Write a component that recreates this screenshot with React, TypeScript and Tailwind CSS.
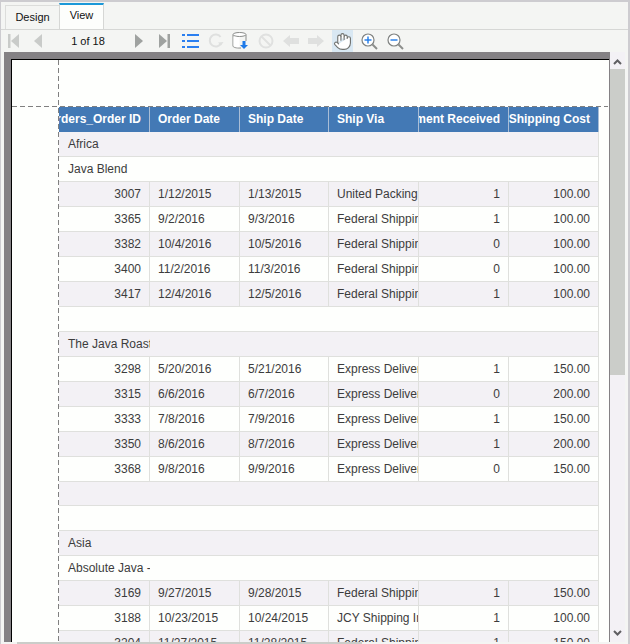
import React from 'react';
import { Hand } from 'lucide-react';

type DataRow = { id: number; order: string; ship: string; via: string; paid: number; cost: string };
type Row =
  | { kind: 'group'; label: string }
  | { kind: 'blank'; short?: boolean }
  | ({ kind: 'data' } & DataRow);

const group = (label: string): Row => ({ kind: 'group', label });
const data = (id: number, order: string, ship: string, via: string, paid: number, cost: string): Row => ({
  kind: 'data', id, order, ship, via, paid, cost,
});

const rows: Row[] = [
  group('Africa'),
  group('Java Blend'),
  data(3007, '1/12/2015', '1/13/2015', 'United Packing', 1, '100.00'),
  data(3365, '9/2/2016', '9/3/2016', 'Federal Shipping', 1, '100.00'),
  data(3382, '10/4/2016', '10/5/2016', 'Federal Shipping', 0, '100.00'),
  data(3400, '11/2/2016', '11/3/2016', 'Federal Shipping', 0, '100.00'),
  data(3417, '12/4/2016', '12/5/2016', 'Federal Shipping', 1, '100.00'),
  { kind: 'blank' },
  group('The Java Roast'),
  data(3298, '5/20/2016', '5/21/2016', 'Express Delivery', 1, '150.00'),
  data(3315, '6/6/2016', '6/7/2016', 'Express Delivery', 0, '200.00'),
  data(3333, '7/8/2016', '7/9/2016', 'Express Delivery', 1, '150.00'),
  data(3350, '8/6/2016', '8/7/2016', 'Express Delivery', 1, '200.00'),
  data(3368, '9/8/2016', '9/9/2016', 'Express Delivery', 0, '150.00'),
  { kind: 'blank', short: true },
  { kind: 'blank' },
  group('Asia'),
  group('Absolute Java - '),
  data(3169, '9/27/2015', '9/28/2015', 'Federal Shipping', 1, '150.00'),
  data(3188, '10/23/2015', '10/24/2015', 'JCY Shipping Inc', 1, '100.00'),
  data(3204, '11/27/2015', '11/28/2015', 'Federal Shipping', 1, '150.00'),
];

const columns = 'grid grid-cols-[91px_90px_89px_90px_90px_90px] w-[540px]';
const cell = 'flex items-center overflow-hidden whitespace-nowrap border-r border-[#dfe0dd]';

const HeaderCell: React.FC<{ label: string; right?: boolean }> = ({ label, right }) => (
  <div
    className={`flex items-center overflow-hidden whitespace-nowrap border-r border-[#a9bdd6] pb-[2px] font-bold text-white ${
      right ? 'justify-end pr-2' : 'pl-2'
    }`}
  >
    <span className="shrink-0">{label}</span>
  </div>
);

const TableRow: React.FC<{ row: Row; shaded: boolean }> = ({ row, shaded }) => {
  const bg = `${columns} border-b border-[#dfe0dd] ${shaded ? 'bg-[#f3f1f5]' : 'bg-[#fefffd]'}`;
  if (row.kind === 'blank') {
    return (
      <div className={`${bg} ${row.short ? 'h-[24px]' : 'h-[25px]'}`}>
        <div className="col-span-6 border-r border-[#dfe0dd]" />
      </div>
    );
  }
  if (row.kind === 'group') {
    return (
      <div className={`${bg} h-[25px]`}>
        <div className="flex items-center overflow-hidden whitespace-nowrap pl-[9px]">{row.label}</div>
        <div className="col-span-5 border-r border-[#dfe0dd]" />
      </div>
    );
  }
  return (
    <div className={`${bg} h-[25px]`}>
      <div className={`${cell} justify-end pr-2`}>{row.id}</div>
      <div className={`${cell} pl-2`}>{row.order}</div>
      <div className={`${cell} pl-2`}>{row.ship}</div>
      <div className={`${cell} pl-2`}>{row.via}</div>
      <div className={`${cell} justify-end pr-2`}>{row.paid}</div>
      <div className={`${cell} justify-end pr-2`}>{row.cost}</div>
    </div>
  );
};

const Slot: React.FC<{ className?: string; children: React.ReactNode }> = ({ className = '', children }) => (
  <div className={`flex h-[22px] w-[25px] shrink-0 items-center justify-center ${className}`}>{children}</div>
);

const FirstIcon = () => (
  <svg width="12" height="14" viewBox="0 0 12 14" fill="#c9cbc9">
    <rect x="0" y="0" width="2.5" height="14" />
    <path d="M11 0v14L3 7z" />
  </svg>
);
const PrevIcon = () => (
  <svg width="9" height="14" viewBox="0 0 9 14" fill="#c9cbc9"><path d="M8 0v14L0 7z" /></svg>
);
const NextIcon = () => (
  <svg width="9" height="14" viewBox="0 0 9 14" fill="#9fa2a0"><path d="M1 0v14l8-7z" /></svg>
);
const LastIcon = () => (
  <svg width="12" height="14" viewBox="0 0 12 14" fill="#9fa2a0">
    <rect x="9.5" y="0" width="2.5" height="14" />
    <path d="M1 0v14l8-7z" />
  </svg>
);
const ListIcon = () => (
  <svg width="17" height="14" viewBox="0 0 17 14" fill="#2b7ff0">
    <rect x="0" y="0" width="3" height="2" />
    <rect x="5" y="0" width="12" height="2" />
    <rect x="0" y="6" width="3" height="2" />
    <rect x="5" y="6" width="12" height="2" />
    <rect x="0" y="12" width="3" height="2" />
    <rect x="5" y="12" width="12" height="2" />
  </svg>
);
const RefreshIcon = () => (
  <svg width="16" height="16" viewBox="0 0 16 16" fill="none">
    <path d="M13 10.5A6 6 0 1 1 12.6 4" stroke="#dfe0df" strokeWidth="2" />
    <path d="M15.5 9l-2.5 3.5L10 9.5z" fill="#dfe0df" />
  </svg>
);
const CylinderIcon = () => (
  <svg width="17" height="18" viewBox="0 0 17 18" fill="none">
    <path d="M1 3v11c0 1 2 2 6 2h2" stroke="#8a8c8a" />
    <ellipse cx="7.5" cy="2.5" rx="6.5" ry="2" fill="#fff" stroke="#8a8c8a" />
    <path d="M14 3v6" stroke="#8a8c8a" />
    <path d="M1.5 4.5v9c0 1 2 1.8 6 1.8V5c-3 0-5-.2-6-.5z" fill="#fff" />
    <path d="M10.5 9h3v4H16l-4 4-4-4h2.500z" fill="#1f7ae8" />
  </svg>
);
const StopIcon = () => (
  <svg width="16" height="16" viewBox="0 0 16 16" fill="none" stroke="#e0e1e0" strokeWidth="2">
    <circle cx="8" cy="8" r="6.5" />
    <path d="M3.5 3.5l9 9" />
  </svg>
);
const BackIcon = () => (
  <svg width="16" height="12" viewBox="0 0 16 12" fill="#dfe0df"><path d="M0 6l7-6v3h9v6H7v3z" /></svg>
);
const ForwardIcon = () => (
  <svg width="16" height="12" viewBox="0 0 16 12" fill="#dfe0df"><path d="M16 6L9 0v3H0v6h9v3z" /></svg>
);
const ZoomIcon: React.FC<{ plus?: boolean }> = ({ plus }) => (
  <svg width="17" height="17" viewBox="0 0 17 17" fill="none">
    <circle cx="7" cy="7" r="6" fill="#fff" stroke="#7f8280" strokeWidth="1.2" />
    <path d="M11.5 11.5L16 16" stroke="#8c8e8c" strokeWidth="2" />
    <path d="M3.5 7h7" stroke="#1f7ae8" strokeWidth="1.4" />
    {plus && <path d="M7 3.5v7" stroke="#1f7ae8" strokeWidth="1.4" />}
  </svg>
);

const App: React.FC = () => {
  return (
    <div className="flex h-[644px] w-[630px] flex-col overflow-hidden border-t-2 border-r-2 border-l border-[#cdccd0] bg-[#f4f5f3] font-['Liberation_Sans',Arial,sans-serif] text-[12px] text-[#3c3c3c]">
      {/* tabs */}
      <div className="flex h-[28px] shrink-0 items-end border-b border-[#d6d7d5] pl-[4px] text-[11px] text-[#111]">
        <div className="flex h-[24px] w-[54px] items-center justify-center border-t border-l border-[#dcdddb] pb-px">Design</div>
        <div className="-mb-px flex h-[27px] w-[45px] items-start justify-center border-x border-b border-[#d6d7d5] border-t-2 border-t-[#1b98d8] bg-[#fdfefc] pt-[2px]">View</div>
      </div>

      {/* toolbar */}
      <div className="flex h-[22px] shrink-0 items-center text-[11px] text-[#111]">
        <Slot><FirstIcon /></Slot>
        <Slot><PrevIcon /></Slot>
        <div className="w-[75px] pr-px text-center">1 of 18</div>
        <Slot><NextIcon /></Slot>
        <Slot><LastIcon /></Slot>
        <Slot className="ml-[2px]"><ListIcon /></Slot>
        <Slot><RefreshIcon /></Slot>
        <Slot><CylinderIcon /></Slot>
        <Slot><StopIcon /></Slot>
        <Slot><BackIcon /></Slot>
        <Slot><ForwardIcon /></Slot>
        <div className="ml-[4px] flex h-[22px] w-[21px] items-center justify-center bg-[#d9e8f3]">
          <Hand size={19} strokeWidth={1.4} color="#6f716f" fill="#fff" />
        </div>
        <Slot className="ml-[4px]"><ZoomIcon plus /></Slot>
        <Slot className="ml-px"><ZoomIcon /></Slot>
      </div>

      {/* report viewport + vertical scrollbar */}
      <div className="flex min-h-0 flex-1 pl-[3px]">
        <div className="w-[606px] shrink-0 overflow-hidden bg-[#848184] pt-[7px] pl-[7px]">
          <div className="relative h-full w-[598px] overflow-hidden border-t border-l border-black bg-[#fefffd]">
            <div className="pt-[47px] pl-[47px]">
              <div className={`${columns} h-[25px] bg-[#4379b5]`}>
                <HeaderCell label="Orders_Order ID" right />
                <HeaderCell label="Order Date" />
                <HeaderCell label="Ship Date" />
                <HeaderCell label="Ship Via" />
                <HeaderCell label="Payment Received" right />
                <HeaderCell label="Shipping Cost" right />
              </div>
              {rows.map((row, i) => (
                <TableRow key={i} row={row} shaded={i % 2 === 0} />
              ))}
            </div>
            {/* page margin guides */}
            <div className="absolute top-[46px] left-0 h-px w-[596px] bg-[repeating-linear-gradient(90deg,#808080_0_5px,transparent_5px_8px)]" />
            <div className="absolute top-0 left-[46px] h-full w-px bg-[repeating-linear-gradient(180deg,#808080_0_5px,transparent_5px_8px)]" />
          </div>
        </div>
        <div className="flex w-[15px] shrink-0 flex-col bg-[#f3f1f5]">
          <div className="flex h-[17px] items-end justify-center pb-[4px]">
            <svg width="9" height="6" viewBox="0 0 9 6" fill="none" stroke="#5f5f62" strokeWidth="2"><path d="M1 5l3.5-3.5L8 5" /></svg>
          </div>
          <div className="h-[306px] bg-[#cbcdc9]" />
          <div className="flex flex-1 items-end justify-center pb-[6px]">
            <svg width="9" height="6" viewBox="0 0 9 6" fill="none" stroke="#5f5f62" strokeWidth="2"><path d="M1 1l3.5 3.5L8 1" /></svg>
          </div>
        </div>
      </div>

      {/* horizontal scrollbar */}
      <div className="flex h-[2px] shrink-0 pl-[16px]">
        <div className="h-full w-[345px] bg-[#cbcdc9]" />
      </div>
    </div>
  );
};

export default App;
